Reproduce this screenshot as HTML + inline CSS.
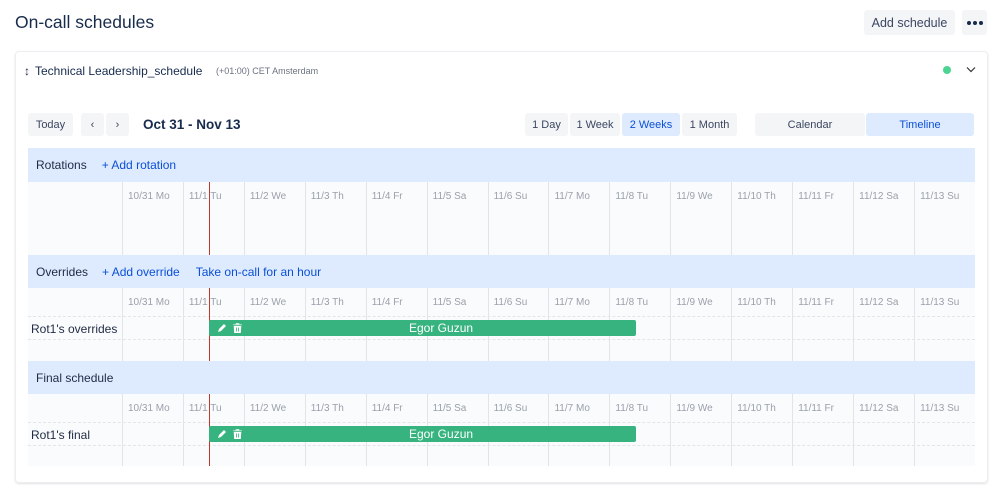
<!DOCTYPE html>
<html><head><meta charset="utf-8"><style>
*{box-sizing:border-box;margin:0;padding:0}
body{width:999px;height:495px;background:#fff;font-family:"Liberation Sans",sans-serif;color:#1f2a44;position:relative;overflow:hidden}
.a{position:absolute}
.btn{position:absolute;background:#f4f5f7;border-radius:3px;font-size:12px;color:#3b4660;display:flex;align-items:center;justify-content:center}
.card{position:absolute;left:15px;top:51px;width:973px;height:432px;border:1px solid #eceef1;border-radius:4px;box-shadow:0 1px 2px rgba(0,0,0,.12)}
.hdr{position:absolute;left:28px;width:947px;height:34px;background:#deebff;font-size:12px;display:flex;align-items:center;padding-left:8px}
.hdr .l{color:#0b4fd6;margin-left:15px}
.grid{position:absolute;left:28px;width:947px;background:#fafbfc;display:grid;grid-template-columns:94px repeat(14,1fr)}
.grid div{border-left:1px solid #e3e4e8;font-size:10px;color:#9aa0ab;padding:9px 0 0 5px;white-space:nowrap}
.grid div:first-child{border-left:none}
.dash{position:absolute;left:28px;width:947px;border-top:1px dashed #e3e5e9}
.bar{position:absolute;left:209px;width:427px;height:16px;background:#36b37e;border-radius:2px;color:#fff;font-size:12px;display:flex;align-items:center}
.bar span.n{position:absolute;left:200px}
.rl{position:absolute;left:31px;font-size:12px;color:#1f2a44}
.now{position:absolute;left:209px;width:1px;background:#c0392b}
.dot{position:absolute;width:4px;height:4px;border-radius:50%;background:#172b4d;top:21px}
</style></head><body>
<div class="a" style="left:15px;top:12px;font-size:17.5px;color:#172b4d">On-call schedules</div>
<div class="btn" style="left:864px;top:10px;width:91px;height:25px;font-size:12.5px">Add schedule</div>
<div class="btn" style="left:962px;top:10px;width:25px;height:25px"></div>
<div class="dot" style="left:967px"></div><div class="dot" style="left:973px"></div><div class="dot" style="left:979px"></div>
<div class="card"></div>
<div class="a" style="left:24px;top:64px;font-size:12px;color:#172b4d">↕</div>
<div class="a" style="left:35px;top:64px;font-size:12px;color:#172b4d">Technical Leadership_schedule</div>
<div class="a" style="left:216px;top:66px;font-size:9px;color:#6b7280">(+01:00) CET Amsterdam</div>
<div class="a" style="left:943px;top:66px;width:8px;height:8px;border-radius:50%;background:#4cd493"></div>
<svg class="a" style="left:966px;top:66px" width="10" height="7"><path d="M1 1.5L5 5.5L9 1.5" fill="none" stroke="#333" stroke-width="1.2"/></svg>

<div class="btn" style="left:28px;top:113px;width:45px;height:23px;font-size:11px">Today</div>
<div class="btn" style="left:81px;top:113px;width:23px;height:23px;font-size:11px">‹</div>
<div class="btn" style="left:106px;top:113px;width:23px;height:23px;font-size:11px">›</div>
<div class="a" style="left:143px;top:117px;font-size:13.5px;font-weight:bold;color:#172b4d">Oct 31 - Nov 13</div>
<div class="btn" style="left:525px;top:113px;width:43px;height:23px;font-size:11px">1 Day</div>
<div class="btn" style="left:570px;top:113px;width:50px;height:23px;font-size:11px">1 Week</div>
<div class="btn" style="left:622px;top:113px;width:58px;height:23px;font-size:11px;background:#deebff;color:#0b4fd6">2 Weeks</div>
<div class="btn" style="left:682px;top:113px;width:55px;height:23px;font-size:11px">1 Month</div>
<div class="btn" style="left:755px;top:113px;width:110px;height:23px;font-size:11px">Calendar</div>
<div class="btn" style="left:866px;top:113px;width:108px;height:23px;font-size:11px;background:#deebff;color:#0b4fd6">Timeline</div>

<div class="hdr" style="top:148px">Rotations<span class="l">+ Add rotation</span></div>
<div class="grid" style="top:182px;height:73px"><div></div><div>10/31 Mo</div><div>11/1 Tu</div><div>11/2 We</div><div>11/3 Th</div><div>11/4 Fr</div><div>11/5 Sa</div><div>11/6 Su</div><div>11/7 Mo</div><div>11/8 Tu</div><div>11/9 We</div><div>11/10 Th</div><div>11/11 Fr</div><div>11/12 Sa</div><div>11/13 Su</div></div>

<div class="hdr" style="top:255px">Overrides<span class="l" style="margin-left:14px">+ Add override</span><span class="l" style="margin-left:16px">Take on-call for an hour</span></div>
<div class="grid" style="top:288px;height:73px"><div></div><div>10/31 Mo</div><div>11/1 Tu</div><div>11/2 We</div><div>11/3 Th</div><div>11/4 Fr</div><div>11/5 Sa</div><div>11/6 Su</div><div>11/7 Mo</div><div>11/8 Tu</div><div>11/9 We</div><div>11/10 Th</div><div>11/11 Fr</div><div>11/12 Sa</div><div>11/13 Su</div></div>
<div class="dash" style="top:316px"></div><div class="dash" style="top:339px"></div>
<div class="rl" style="top:322px">Rot1's overrides</div>

<div class="hdr" style="top:361px">Final schedule</div>
<div class="grid" style="top:394px;height:72px"><div></div><div>10/31 Mo</div><div>11/1 Tu</div><div>11/2 We</div><div>11/3 Th</div><div>11/4 Fr</div><div>11/5 Sa</div><div>11/6 Su</div><div>11/7 Mo</div><div>11/8 Tu</div><div>11/9 We</div><div>11/10 Th</div><div>11/11 Fr</div><div>11/12 Sa</div><div>11/13 Su</div></div>
<div class="dash" style="top:422px"></div><div class="dash" style="top:445px"></div>
<div class="rl" style="top:428px">Rot1's final</div>

<div class="now" style="top:182px;height:73px"></div>
<div class="now" style="top:288px;height:73px"></div>
<div class="now" style="top:394px;height:72px"></div>

<div class="bar" style="top:320px"><svg class="a" style="left:8px;top:3px" width="10" height="10"><path d="M1 9L2 6L7 1L9 3L4 8Z" fill="#fff"/></svg><svg class="a" style="left:24px;top:3px" width="9" height="10"><path d="M0 1.5H9M3 1.5V0.5H6V1.5M1 3H8L7.5 10H1.5Z" fill="#fff" stroke="#fff" stroke-width=".6"/><path d="M3.5 4.5V8.5M5.5 4.5V8.5" stroke="#36b37e" stroke-width=".8"/></svg><span class="n">Egor Guzun</span></div>
<div class="bar" style="top:426px"><svg class="a" style="left:8px;top:3px" width="10" height="10"><path d="M1 9L2 6L7 1L9 3L4 8Z" fill="#fff"/></svg><svg class="a" style="left:24px;top:3px" width="9" height="10"><path d="M0 1.5H9M3 1.5V0.5H6V1.5M1 3H8L7.5 10H1.5Z" fill="#fff" stroke="#fff" stroke-width=".6"/><path d="M3.5 4.5V8.5M5.5 4.5V8.5" stroke="#36b37e" stroke-width=".8"/></svg><span class="n">Egor Guzun</span></div>
</body></html>
